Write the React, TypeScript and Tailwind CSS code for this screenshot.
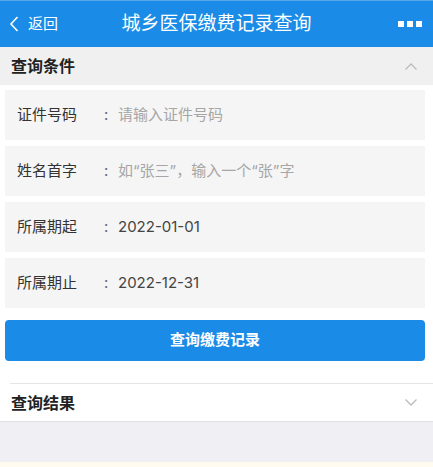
import React from "react";

const font = { fontFamily: 'Inter, "Noto Sans CJK SC", "Noto Sans", sans-serif' };

function Row({ label, value, placeholder }: { label: string; value: string; placeholder?: boolean }) {
  return (
    <div className="flex items-center h-[50px] bg-[#f5f5f5] mx-[5px] w-[420px] pl-[12px]">
      <span className="w-[87px] text-[15px] text-[#333]">{label}</span>
      <span className="w-[14px] text-[15px] text-[#666]">:</span>
      <span className={placeholder ? "text-[15px] text-[#a6a6a6]" : "text-[15px] text-[#444]"}>{value}</span>
    </div>
  );
}

export default function App() {
  return (
    <div className="w-[433px] h-[467px] bg-white flex flex-col overflow-hidden" style={font}>
      <div className="h-[47px] bg-[#1a8be6] flex items-center relative shrink-0 border-t border-[#5aa8ec]">
        <div className="flex items-center pl-[8px] text-white">
          <svg width="12" height="18" viewBox="0 0 12 18" fill="none">
            <path d="M9.5 2 L3 9 L9.5 16" stroke="white" strokeWidth="1.6" />
          </svg>
          <span className="ml-[8px] text-[15px]">返回</span>
        </div>
        <div className="absolute left-0 right-0 text-center text-white text-[19px] pointer-events-none">城乡医保缴费记录查询</div>
        <div className="ml-auto mr-[11px] flex gap-[3px]">
          <div className="w-[6px] h-[6px] bg-white" />
          <div className="w-[6px] h-[6px] bg-white" />
          <div className="w-[6px] h-[6px] bg-white" />
        </div>
      </div>
      <div className="h-[38px] bg-[#f0f0f0] flex items-center px-[11px] shrink-0">
        <span className="text-[16px] font-bold text-[#222]">查询条件</span>
        <svg className="ml-auto mr-[4px]" width="14" height="9" viewBox="0 0 14 9" fill="none">
          <path d="M1.5 7.5 L7 2 L12.5 7.5" stroke="#bbb" strokeWidth="1.3" />
        </svg>
      </div>
      <div className="flex flex-col gap-[6px] pt-[5px]">
        <Row label="证件号码" value="请输入证件号码" placeholder />
        <Row label="姓名首字" value="如“张三”，输入一个“张”字" placeholder />
        <Row label="所属期起" value="2022-01-01" />
        <Row label="所属期止" value="2022-12-31" />
      </div>
      <div className="mx-[5px] w-[420px] mt-[12px] h-[41px] rounded-[4px] bg-[#1a8be6] flex items-center justify-center text-white text-[15px] font-bold">
        查询缴费记录
      </div>
      <div className="mt-[22px] ml-[10px] border-t border-[#e6e6e6]" />
      <div className="h-[37px] flex items-center px-[11px] shadow-[0_1px_1px_rgba(0,0,0,0.06)] relative">
        <span className="text-[16px] font-bold text-[#222]">查询结果</span>
        <svg className="ml-auto mr-[4px]" width="14" height="9" viewBox="0 0 14 9" fill="none">
          <path d="M1.5 1.5 L7 7 L12.5 1.5" stroke="#bbb" strokeWidth="1.3" />
        </svg>
      </div>
      <div className="flex-1 bg-[#f0f0f4]" />
      <div className="h-[5px] bg-[#fffbef] shrink-0" />
    </div>
  );
}
